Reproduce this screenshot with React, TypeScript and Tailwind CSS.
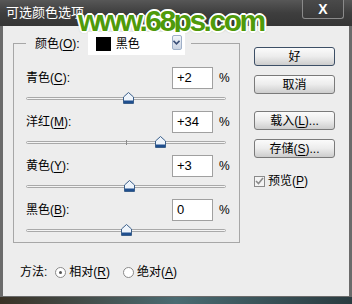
import React from "react";

const rows = [
  { name: "青色", key: "C", value: "+2", pos: 2 },
  { name: "洋红", key: "M", value: "+34", pos: 34 },
  { name: "黄色", key: "Y", value: "+3", pos: 3 },
  { name: "黑色", key: "B", value: "0", pos: 0 },
];

function Mn({ k }: { k: string }) {
  return (
    <>
      (<span className="underline underline-offset-2">{k}</span>)
    </>
  );
}

function Thumb() {
  return (
    <svg width="11" height="12" viewBox="0 0 11 12">
      <path d="M0.5 5 L5.5 0.5 L10.5 5 L10.5 11.5 L0.5 11.5 Z" fill="#eef4fb" stroke="#3b5f8a" />
      <rect x="1" y="8.5" width="9" height="2.5" fill="#1f4f8f" />
    </svg>
  );
}

function Slider({ pos }: { pos: number }) {
  return (
    <div className="relative h-[18px] w-[200px]">
      <div className="absolute left-0 top-[8px] h-[3px] w-[200px] rounded-full border border-[#a9a9a9] bg-[#f4f4f4]" />
      <div className="absolute left-[100px] top-[7px] h-[5px] w-px bg-[#8a8a8a]" />
      <div className="absolute top-[3px]" style={{ left: 100 + pos - 5 }}>
        <Thumb />
      </div>
    </div>
  );
}

function Btn({ children, def }: { children: React.ReactNode; def?: boolean }) {
  return (
    <button
      className={`flex h-[19px] w-[81px] items-center justify-center rounded-[3px] border bg-gradient-to-b from-[#fbfbfb] via-[#ececec] to-[#cdcdcd] text-[12px] leading-none text-black ${
        def ? "border-[#3d4f66]" : "border-[#7a7a7a]"
      }`}
    >
      {children}
    </button>
  );
}

export default function App() {
  return (
    <div
      className="relative flex h-[304px] w-[352px] flex-col overflow-hidden bg-[#2c2c2c] text-[12px] text-black"
      style={{ fontFamily: '"Liberation Sans", "Noto Sans CJK SC", sans-serif' }}
    >
      {/* title bar */}
      <div className="relative flex h-[26px] shrink-0 items-center bg-gradient-to-b from-[#575757] via-[#3e3e3e] to-[#353535] pl-[6px]">
        <span className="text-[13px] text-white">可选颜色选项</span>
        <div className="absolute right-[8px] top-0 flex h-[19px] w-[42px] items-center justify-center rounded-b-[3px] border border-t-0 border-[#8a8a8a] bg-gradient-to-b from-[#4a4a4a] to-[#3a3a3a]">
          <span className="text-[14px] font-bold leading-none text-white">X</span>
        </div>
        <span
          className="absolute left-[78px] top-[-2px] text-[30px] font-bold tracking-[-2.5px] text-[#4f9a0a]"
          style={{
            textShadow:
              "1px 1px 0 #fff, -1px -1px 0 #fff, 1px -1px 0 #fff, -1px 1px 0 #fff, 2px 0 0 #fff, -2px 0 0 #fff, 0 2px 0 #fff, 0 -2px 0 #fff, 0 0 3px #2f5f00",
          }}
        >
          www.68ps.com
        </span>
      </div>

      {/* body */}
      <div className="flex h-[271px] shrink-0 border-x-[3px] border-b border-[#6b6b6b] bg-[#ededed]">
        <div className="flex flex-col pl-[10px] pt-[6px]">
          <fieldset className="w-[227px] border border-[#a7a7a7] pb-[3px] pl-[12px] pr-[11px]">
            <legend className="flex items-center pl-[9px] pr-[6px]">
              <span className="mr-[8px]">
                颜色<Mn k="O" />:
              </span>
              <div className="relative flex h-[23px] w-[97px] items-center bg-white pl-[8px]">
                <div className="h-[14px] w-[15px] bg-black" />
                <span className="ml-[5px]">黑色</span>
                <div className="absolute right-[3px] top-[3px] flex h-[15px] w-[10px] items-center justify-center rounded-[2px] border border-[#9fb0c8] bg-gradient-to-b from-[#f2f5fa] to-[#c9d3e2]">
                  <svg width="7" height="5" viewBox="0 0 7 5">
                    <path d="M0.5 0.8 L3.5 3.8 L6.5 0.8" fill="none" stroke="#3b4f78" strokeWidth="1.6" />
                  </svg>
                </div>
              </div>
            </legend>
            <div className="mt-[12px] flex flex-col gap-[4px]">
              {rows.map((r) => (
                <div key={r.key} className="flex flex-col">
                  <div className="flex h-[22px] items-center">
                    <span className="flex-1">
                      {r.name}
                      <Mn k={r.key} />:
                    </span>
                    <div className="flex h-[22px] w-[41px] items-center border border-[#a0a0a0] bg-white pl-[4px] text-[13px]">
                      {r.value}
                    </div>
                    <span className="w-[15px] pl-[6px]">%</span>
                  </div>
                  <Slider pos={r.pos} />
                </div>
              ))}
            </div>
          </fieldset>
          <div className="mt-[20px] flex items-center pl-[7px]">
            <span>方法:</span>
            <div className="ml-[8px] flex h-[11px] w-[11px] items-center justify-center rounded-full border border-[#8a8a8a] bg-white">
              <div className="h-[3px] w-[3px] rounded-full bg-[#555]" />
            </div>
            <span className="ml-[3px]">
              相对<Mn k="R" />
            </span>
            <div className="ml-[13px] h-[11px] w-[11px] rounded-full border border-[#8a8a8a] bg-white" />
            <span className="ml-[3px]">
              绝对<Mn k="A" />
            </span>
          </div>
        </div>

        <div className="ml-[14px] flex flex-col pt-[21px]">
          <Btn def>好</Btn>
          <div className="mt-[9px]">
            <Btn>取消</Btn>
          </div>
          <div className="mt-[17px]">
            <Btn>
              载入<Mn k="L" />...
            </Btn>
          </div>
          <div className="mt-[9px]">
            <Btn>
              存储<Mn k="S" />...
            </Btn>
          </div>
          <div className="mt-[14px] flex items-center">
            <div className="flex h-[11px] w-[11px] items-center justify-center border border-[#8a8a8a] bg-[#f4f4f4]">
              <svg width="9" height="8" viewBox="0 0 9 8">
                <path d="M1 4 L3.5 6.5 L8 1" fill="none" stroke="#8a8a8a" strokeWidth="1.6" />
              </svg>
            </div>
            <span className="ml-[3px]">
              预览<Mn k="P" />
            </span>
          </div>
        </div>
      </div>

      {/* photo behind dialog */}
      <div className="flex-1 bg-gradient-to-r from-[#3a3226] via-[#4a6b72] to-[#2a3b40]" />
    </div>
  );
}
